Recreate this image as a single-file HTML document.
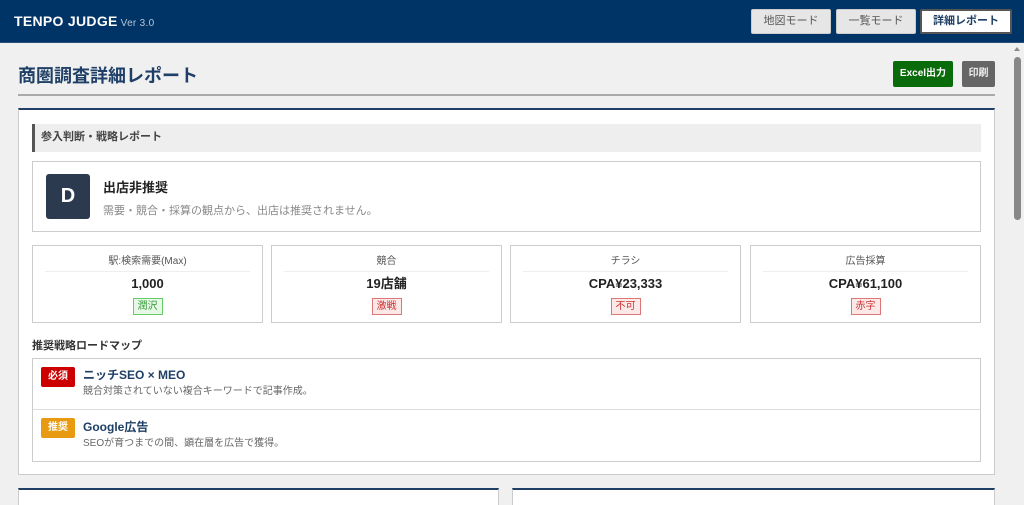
<!DOCTYPE html>
<html><head><meta charset="utf-8"><style>
*{box-sizing:border-box;margin:0;padding:0}
html,body{width:1024px;height:505px;overflow:hidden}
body{background:#f0f0f0;font-family:"Liberation Sans","Noto Sans CJK JP",sans-serif;position:relative;color:#333}
.hd{position:absolute;left:0;top:0;width:1024px;height:43px;background:#003366;border-bottom:1px solid #2a4f7a}
.logo{position:absolute;left:14px;top:13px;color:#fff;font-weight:bold;font-size:14px;letter-spacing:.3px}
.logo span{font-weight:normal;font-size:10px;color:#b8c6d8;margin-left:3px}
.nb{position:absolute;top:9px;height:25px;border-radius:2px;background:#e6e6e6;border:1px solid #ccc;font-size:11px;color:#555;text-align:center;line-height:23px}
.a{position:absolute}
.box{position:absolute;background:#fff;border:1px solid #ccc}
.m{position:absolute;top:245px;width:231px;height:78px;background:#fff;border:1px solid #ccc;text-align:center}
.m .l{position:absolute;left:12px;right:12px;top:9px;height:17px;line-height:14px;font-size:10px;color:#555;border-bottom:1px solid #eee}
.m .v{position:absolute;left:0;right:0;top:29px;line-height:18px;font-size:13px;font-weight:bold;color:#222}
.m .t{position:absolute;left:0;right:0;top:50px}
.tag{display:inline-block;font-size:10px;padding:0 4px;line-height:15px;border:1px solid}
.g{background:#e8f8e8;border-color:#6c6;color:#393}
.r{background:#fde8e8;border-color:#d77;color:#c33}
.bd{position:absolute;left:8px;width:34px;height:20px;color:#fff;font-size:10px;font-weight:bold;text-align:center;line-height:20px;border-radius:2px}
.rt{position:absolute;left:50px;font-size:12px;font-weight:bold;color:#1f3f66;line-height:16px}
.rd{position:absolute;left:50px;font-size:10px;color:#666;line-height:14px}
</style></head><body>
<div class="hd"><div class="logo">TENPO JUDGE<span>Ver 3.0</span></div>
<div class="nb" style="left:751px;width:80px">地図モード</div>
<div class="nb" style="left:836px;width:80px">一覧モード</div>
<div class="nb" style="left:920px;width:92px;background:#fff;border:2px solid #555;font-weight:bold;color:#1f3f66;line-height:21px">詳細レポート</div>
</div>
<div class="a" style="left:18px;top:62px;font-size:18px;font-weight:bold;color:#1f3f66">商圏調査詳細レポート</div>
<div class="a" style="left:893px;top:61px;width:60px;height:26px;background:#0a6b0a;color:#fff;font-size:10px;font-weight:bold;text-align:center;line-height:26px;border-radius:2px">Excel出力</div>
<div class="a" style="left:962px;top:61px;width:33px;height:26px;background:#666;color:#eee;font-size:10px;font-weight:bold;text-align:center;line-height:26px;border-radius:2px">印刷</div>
<div class="a" style="left:18px;top:94px;width:977px;height:2px;background:#aaa"></div>
<div class="box" style="left:18px;top:108px;width:977px;height:367px;border-top:2px solid #1f3f66"></div>
<div class="a" style="left:32px;top:124px;width:949px;height:28px;background:#eee;border-left:3px solid #555;font-size:11px;font-weight:bold;color:#444;line-height:27px;padding-left:6px">参入判断・戦略レポート</div>
<div class="box" style="left:32px;top:161px;width:949px;height:71px">
<div class="a" style="left:13px;top:12px;width:44px;height:45px;background:#2b3a4e;color:#fff;font-size:20px;font-weight:bold;text-align:center;line-height:45px;border-radius:3px">D</div>
<div class="a" style="left:70px;top:15px;font-size:13px;font-weight:bold;color:#222">出店非推奨</div>
<div class="a" style="left:70px;top:40px;font-size:11px;color:#888">需要・競合・採算の観点から、出店は推奨されません。</div>
</div>
<div class="m" style="left:32px"><div class="l">駅:検索需要(Max)</div><div class="v">1,000</div><div class="t"><span class="tag g">潤沢</span></div></div>
<div class="m" style="left:271px"><div class="l">競合</div><div class="v">19店舗</div><div class="t"><span class="tag r">激戦</span></div></div>
<div class="m" style="left:510px"><div class="l">チラシ</div><div class="v">CPA¥23,333</div><div class="t"><span class="tag r">不可</span></div></div>
<div class="m" style="left:750px"><div class="l">広告採算</div><div class="v">CPA¥61,100</div><div class="t"><span class="tag r">赤字</span></div></div>
<div class="a" style="left:32px;top:337px;font-size:11px;font-weight:bold;color:#333">推奨戦略ロードマップ</div>
<div class="box" style="left:32px;top:358px;width:949px;height:104px">
<div class="bd" style="top:8px;background:#c00">必須</div>
<div class="rt" style="top:8px">ニッチSEO × MEO</div>
<div class="rd" style="top:26px">競合対策されていない複合キーワードで記事作成。</div>
<div class="a" style="left:0;top:50px;width:947px;height:1px;background:#ddd"></div>
<div class="bd" style="top:59px;background:#e89a10">推奨</div>
<div class="rt" style="top:60px">Google広告</div>
<div class="rd" style="top:78px">SEOが育つまでの間、顕在層を広告で獲得。</div>
</div>
<div class="box" style="left:18px;top:488px;width:481px;height:30px;border-top:2px solid #1f3f66"></div>
<div class="box" style="left:512px;top:488px;width:483px;height:30px;border-top:2px solid #1f3f66"></div>
<div class="a" style="left:1010px;top:43px;width:14px;height:462px;background:#f0f0f0"></div>
<div class="a" style="left:1014px;top:57px;width:7px;height:163px;background:#888;border-radius:4px"></div>
<div class="a" style="left:1014px;top:47px;width:0;height:0;border-left:3px solid transparent;border-right:3px solid transparent;border-bottom:4px solid #888"></div>
</body></html>
